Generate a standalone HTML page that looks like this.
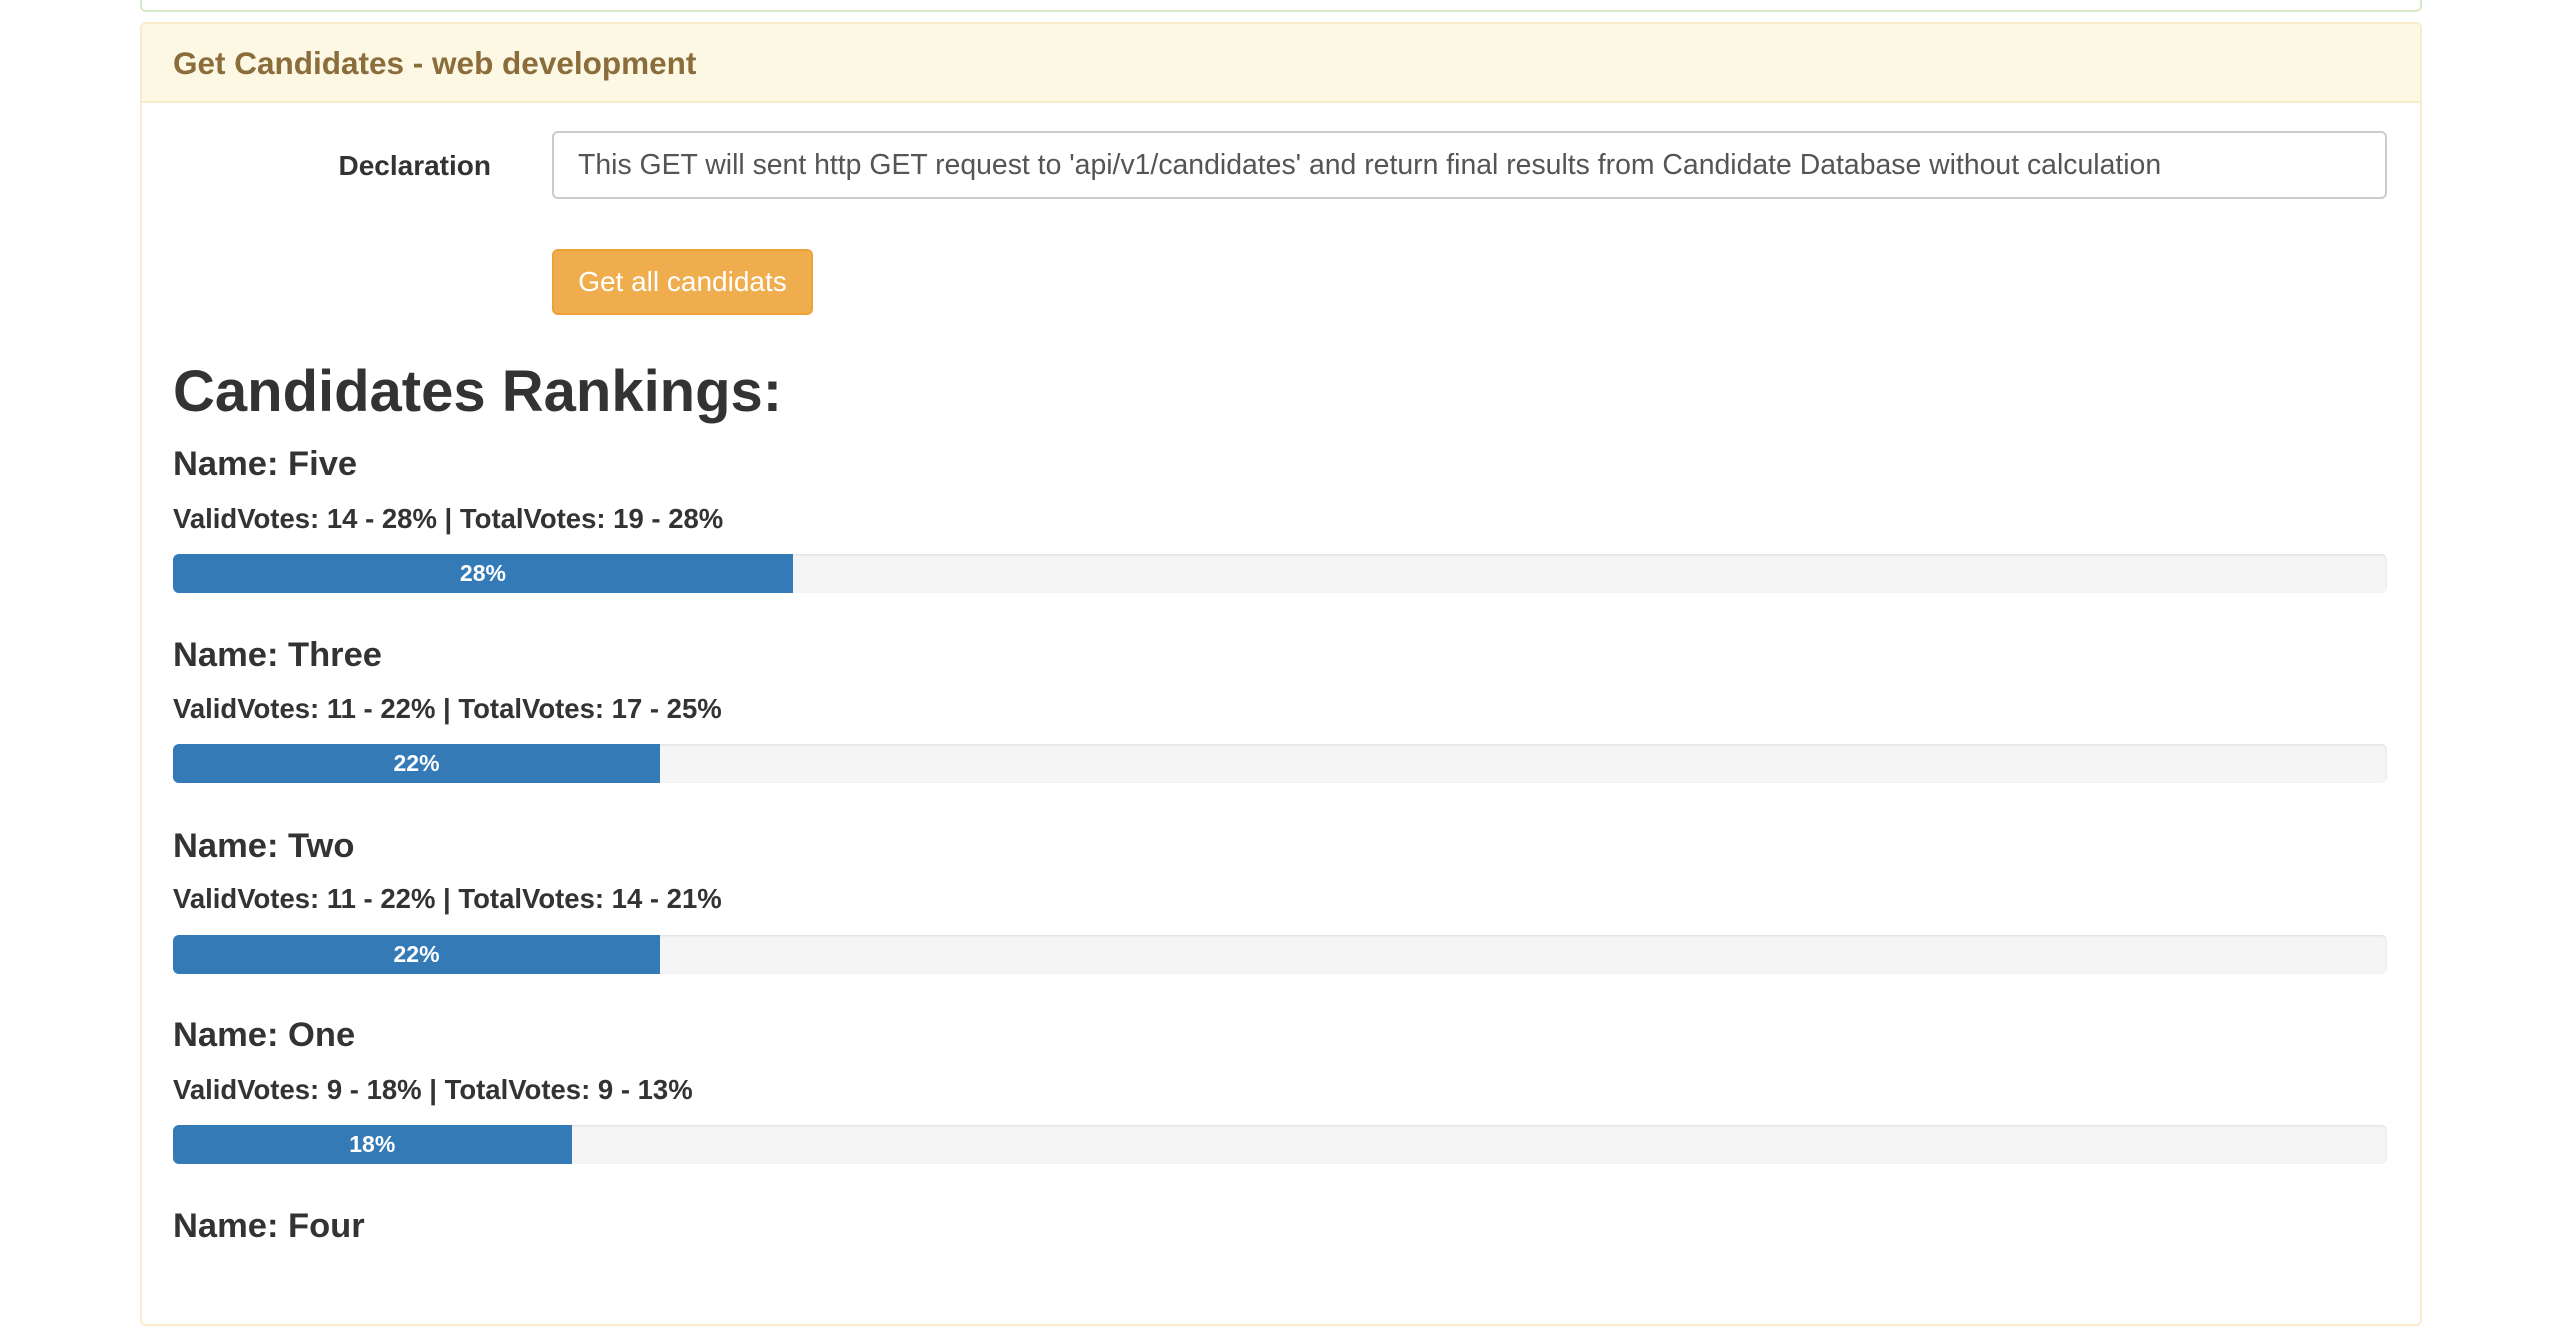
<!DOCTYPE html>
<html><head><meta charset="utf-8"><style>
body{margin:0;width:2560px;height:1254px;overflow:hidden;background:#fff;font-family:"Liberation Sans",Arial,sans-serif;color:#333;position:relative}
.a{position:absolute}
.green{left:140px;top:-20px;width:2278px;height:28px;border:2px solid #d6e9c6;border-radius:6px}
.panel{left:140px;top:22px;width:2278px;height:1300px;border:2px solid #faebcc;border-radius:6px}
.head{left:142px;top:24px;width:2278px;height:77px;background:#fcf8e3;border-bottom:2px solid #faebcc;border-radius:5px 5px 0 0}
.title{left:173px;top:45px;font-size:31.5px;font-weight:bold;color:#8a6d3b;line-height:36px}
.lbl{left:280px;width:211px;text-align:right;top:150px;font-size:28px;font-weight:bold;line-height:32px}
.inp{left:552px;top:131px;width:1835px;height:68px;border:2px solid #ccc;border-radius:6px;box-sizing:border-box;font-size:28.4px;line-height:64px;padding-left:24px;color:#555}
.btn{left:552px;top:249px;width:261px;height:66px;background:#f0ad4e;border:2px solid #eea236;border-radius:6px;box-sizing:border-box;color:#fff;font-size:28px;line-height:62px;text-align:center}
h1{position:absolute;left:173px;top:354px;margin:0;font-size:58px;font-weight:bold;line-height:76px}
.name{left:173px;font-size:34.5px;font-weight:bold;line-height:40px}
.vv{left:173px;font-size:27.5px;font-weight:bold;line-height:32px}
.prog{left:173px;width:2214px;height:39px;background:#f5f5f5;border-radius:6px;overflow:hidden;box-shadow:inset 0 1px 2px rgba(0,0,0,.1)}
.bar{height:39px;background:#337ab7;color:#fff;font-size:23px;font-weight:bold;line-height:39px;text-align:center}
</style></head><body>
<div class="a green"></div>
<div class="a panel"></div>
<div class="a head"></div>
<div class="a title">Get Candidates - web development</div>
<div class="a lbl">Declaration</div>
<div class="a inp">This GET will sent http GET request to 'api/v1/candidates' and return final results from Candidate Database without calculation</div>
<div class="a btn">Get all candidats</div>
<h1>Candidates Rankings:</h1>

<div class="a name" style="top:444px">Name: Five</div>
<div class="a vv" style="top:503px">ValidVotes: 14 - 28% | TotalVotes: 19 - 28%</div>
<div class="a prog" style="top:554px"><div class="bar" style="width:28%">28%</div></div>

<div class="a name" style="top:635px">Name: Three</div>
<div class="a vv" style="top:693px">ValidVotes: 11 - 22% | TotalVotes: 17 - 25%</div>
<div class="a prog" style="top:744px"><div class="bar" style="width:22%">22%</div></div>

<div class="a name" style="top:826px">Name: Two</div>
<div class="a vv" style="top:883px">ValidVotes: 11 - 22% | TotalVotes: 14 - 21%</div>
<div class="a prog" style="top:935px"><div class="bar" style="width:22%">22%</div></div>

<div class="a name" style="top:1015px">Name: One</div>
<div class="a vv" style="top:1074px">ValidVotes: 9 - 18% | TotalVotes: 9 - 13%</div>
<div class="a prog" style="top:1125px"><div class="bar" style="width:18%">18%</div></div>

<div class="a name" style="top:1206px">Name: Four</div>
</body></html>
